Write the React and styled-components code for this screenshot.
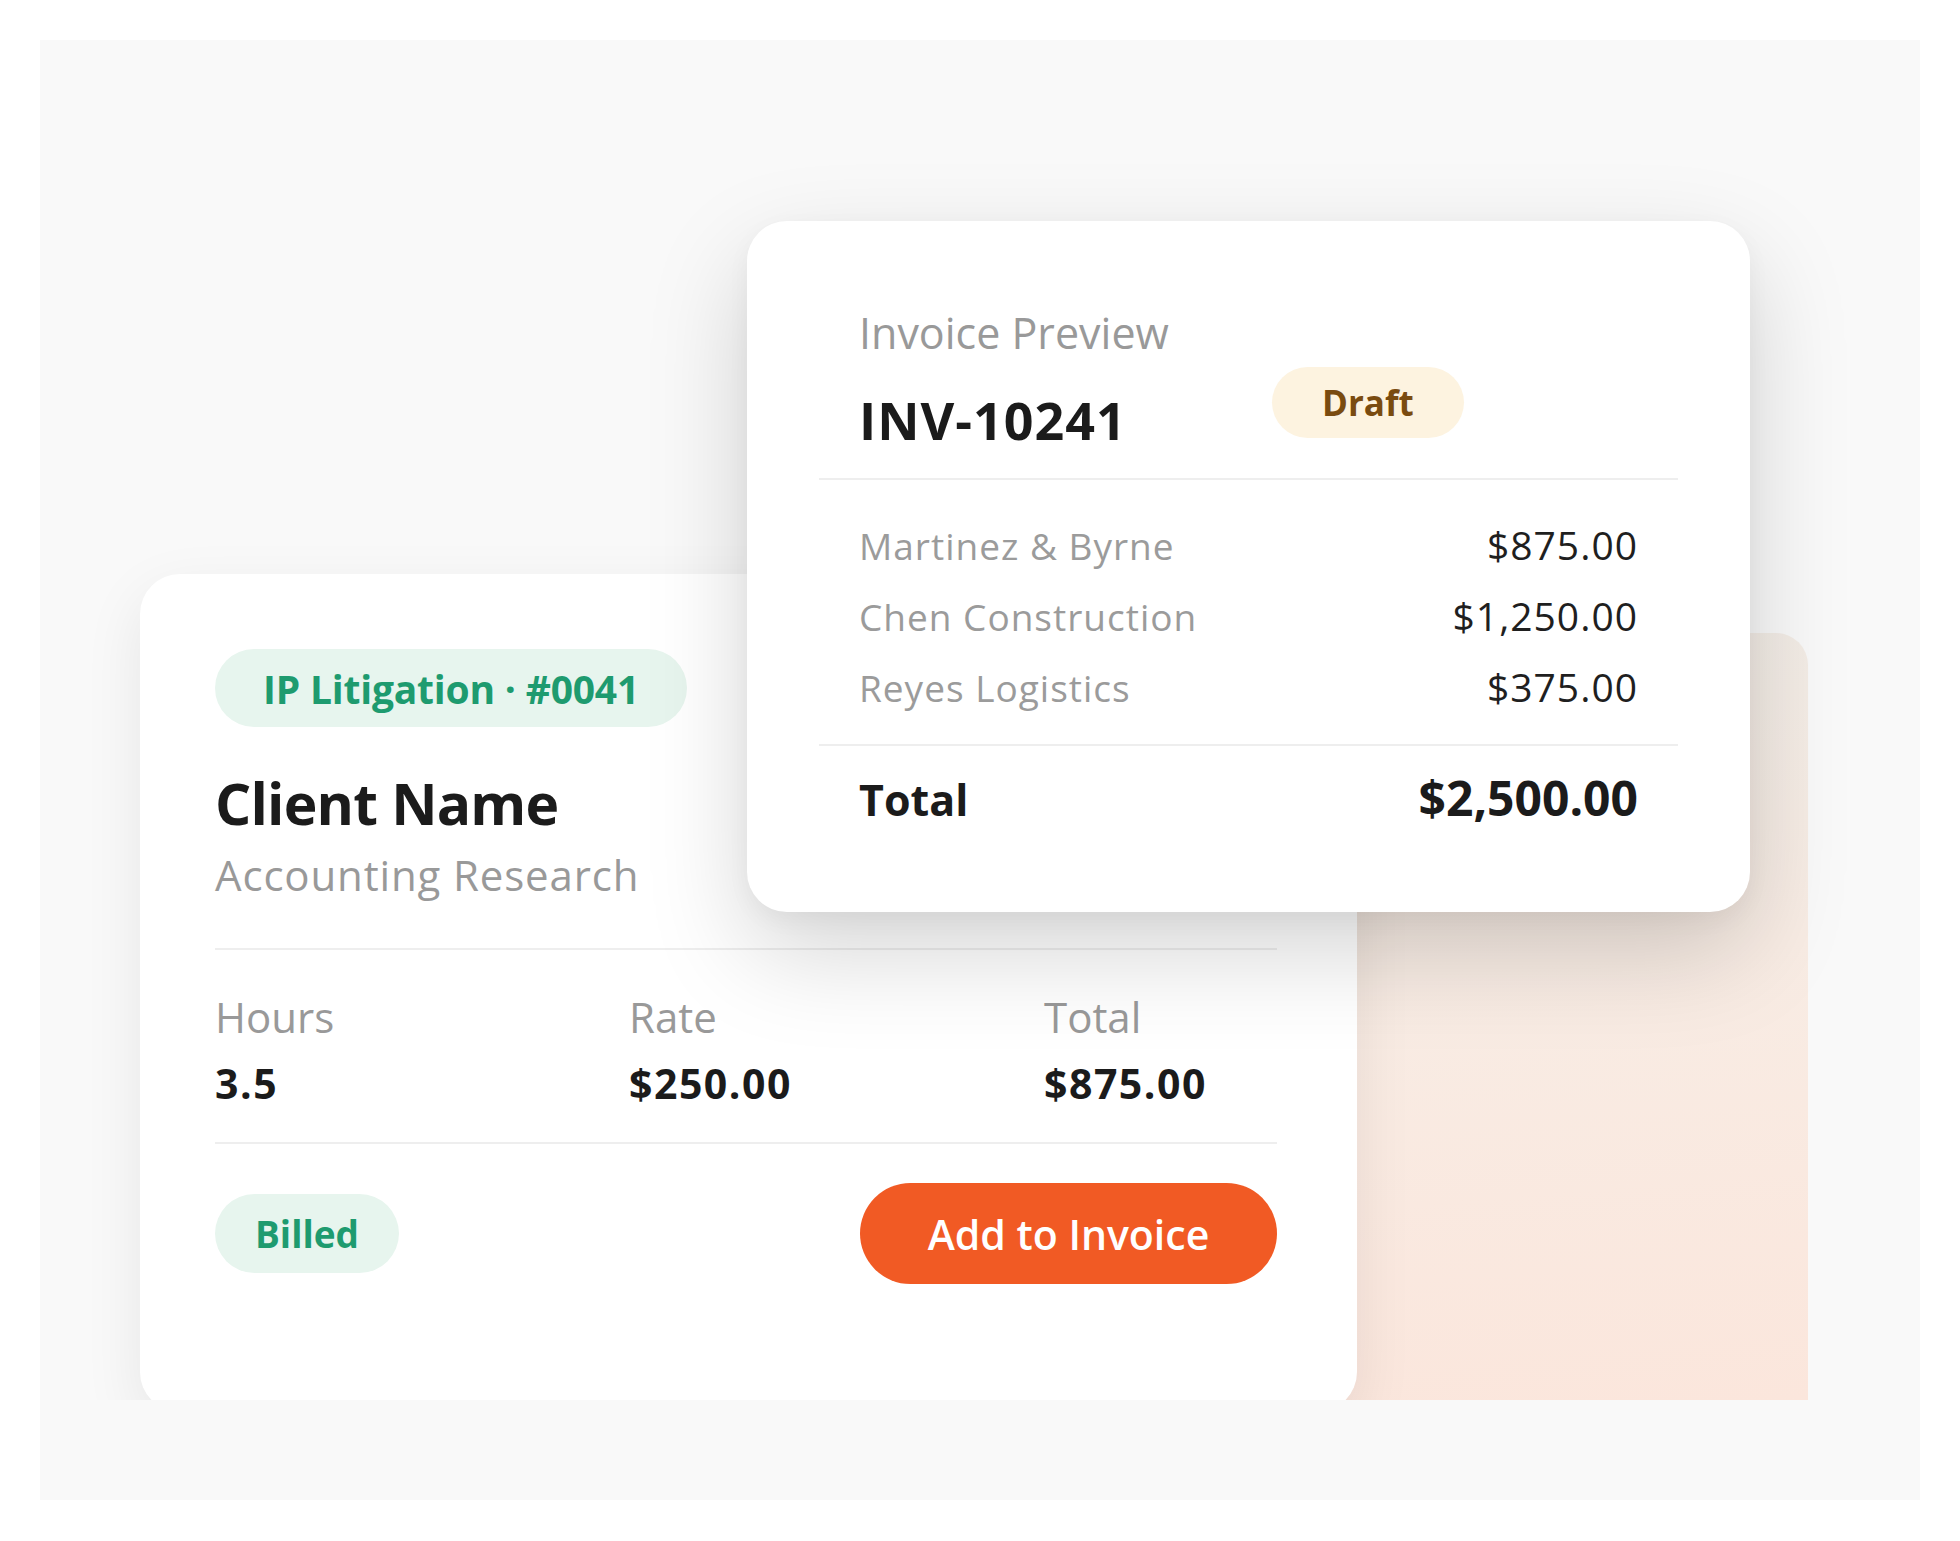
import React from "react";
import styled, { createGlobalStyle } from "styled-components";

const GlobalStyle = createGlobalStyle`
  html, body { margin: 0; padding: 0; background: #ffffff; }
  body { font-family: "Open Sans", Lato, sans-serif; -webkit-font-smoothing: antialiased; }
  * { box-sizing: border-box; }
`;

const Page = styled.div`
  width: 1960px;
  height: 1541px;
  padding: 40px;
`;

const Panel = styled.div`
  width: 1880px;
  height: 1460px;
  background: #f9f9f9;
  padding: 181px 0 0 100px;
`;

const Stage = styled.div`
  display: grid;
  grid-template-columns: 1668px;
  grid-template-rows: 1179px;
  width: 1668px;
  height: 1179px;
  clip-path: inset(-300px -300px 0 -300px);
  & > * { grid-area: 1 / 1; }
`;

const PeachPanel = styled.div`
  justify-self: end;
  align-self: end;
  width: 808px;
  height: 767px;
  border-top-right-radius: 32px;
  background: linear-gradient(175deg, #f2ede7 0%, #f8ece4 45%, #fbe6dc 100%);
`;

const Card = styled.div`
  justify-self: start;
  align-self: start;
  background: #ffffff;
  border-radius: 40px;
`;

const ClientCard = styled(Card)`
  margin-top: 353px;
  width: 1217px;
  height: 838px;
  padding: 75px 80px 0 75px;
  display: flex;
  flex-direction: column;
  align-items: stretch;
  box-shadow: 0 20px 60px rgba(0, 0, 0, 0.08);
`;

const InvoiceCard = styled(Card)`
  margin-left: 607px;
  width: 1003px;
  height: 691px;
  padding: 86px 72px 0 72px;
  box-shadow: 0 40px 100px rgba(0, 0, 0, 0.17), 0 8px 24px rgba(0, 0, 0, 0.04);
`;

const Pill = styled.span`
  display: inline-flex;
  align-items: center;
  justify-content: center;
  align-self: ${(p) => p.$align || "flex-start"};
  height: ${(p) => p.$h}px;
  padding: 0 ${(p) => p.$px}px;
  border-radius: 999px;
  font-size: ${(p) => p.$size}px;
  font-weight: 700;
  letter-spacing: ${(p) => p.$ls || 0}px;
  line-height: 1;
  white-space: nowrap;
  color: ${(p) => (p.$tone === "draft" ? "#7a4b10" : "#1e9b6f")};
  background: ${(p) => (p.$tone === "draft" ? "#fdf3e0" : "#e7f5ee")};
`;

const Header = styled.div`
  display: grid;
  grid-template-columns: 413px auto;
  align-items: start;
  padding: 0 40px 27px;
  border-bottom: 2px solid #eeeeee;
`;

const HeaderText = styled.div`
  display: flex;
  flex-direction: column;
  gap: 30px;
`;

const Text = styled.div`
  font-size: ${(p) => p.$size}px;
  font-weight: ${(p) => (p.$bold ? 700 : 400)};
  letter-spacing: ${(p) => p.$ls || 0}px;
  color: ${(p) => (p.$muted ? "#999999" : "#1b1b1b")};
  line-height: 1.2;
  white-space: nowrap;
`;

const DraftWrap = styled.div`
  margin-top: 60px;
`;

const Lines = styled.div`
  padding: 29px 40px 22px;
  border-bottom: 2px solid #eeeeee;
`;

const LineRow = styled.div`
  display: flex;
  justify-content: space-between;
  align-items: baseline;
  height: 71px;
  line-height: 71px;
`;

const LineName = styled.span`
  font-size: 37px;
  letter-spacing: 1px;
  color: #9b9b9b;
`;

const LineAmount = styled.span`
  font-size: 39px;
  letter-spacing: 1px;
  color: #1f1f1f;
`;

const TotalRow = styled.div`
  display: flex;
  justify-content: space-between;
  align-items: baseline;
  padding: 23px 40px 0;
`;

const Title = styled.div`
  margin-top: 42px;
  font-size: 57px;
  font-weight: 700;
  letter-spacing: -0.8px;
  color: #1b1b1b;
  line-height: 1.2;
`;

const Subtitle = styled.div`
  margin-top: 13px;
  font-size: 42px;
  letter-spacing: 0.85px;
  color: #999999;
  line-height: 1.2;
  padding-bottom: 47px;
  border-bottom: 2px solid #eeeeee;
`;

const Stats = styled.div`
  display: grid;
  grid-template-columns: 414px 415px auto;
  padding: 42px 0 34px;
  border-bottom: 2px solid #eeeeee;
`;

const Stat = styled.div`
  display: flex;
  flex-direction: column;
  gap: 17px;
`;

const Footer = styled.div`
  display: flex;
  justify-content: space-between;
  align-items: center;
  margin-top: 39px;
`;

const PrimaryButton = styled.button`
  width: 417px;
  height: 101px;
  border: none;
  border-radius: 51px;
  background: #f15a24;
  color: #ffffff;
  font-family: inherit;
  font-size: 41px;
  font-weight: 600;
  cursor: pointer;
`;

const lineItems = [
  { name: "Martinez & Byrne", amount: "$875.00" },
  { name: "Chen Construction", amount: "$1,250.00" },
  { name: "Reyes Logistics", amount: "$375.00" },
];

const stats = [
  { label: "Hours", value: "3.5" },
  { label: "Rate", value: "$250.00" },
  { label: "Total", value: "$875.00" },
];

export default function App() {
  return (
    <>
      <GlobalStyle />
      <Page>
        <Panel>
          <Stage>
            <PeachPanel />
            <ClientCard>
              <Pill $h={78} $px={48} $size={39} $ls={-0.2}>IP Litigation · #0041</Pill>
              <Title>Client Name</Title>
              <Subtitle>Accounting Research</Subtitle>
              <Stats>
                {stats.map((s) => (
                  <Stat key={s.label}>
                    <Text $size={42} $muted>{s.label}</Text>
                    <Text $size={41} $bold $ls={1.5}>{s.value}</Text>
                  </Stat>
                ))}
              </Stats>
              <Footer>
                <Pill $align="center" $h={79} $px={40} $size={37}>Billed</Pill>
                <PrimaryButton>Add to Invoice</PrimaryButton>
              </Footer>
            </ClientCard>
            <InvoiceCard>
              <Header>
                <HeaderText>
                  <Text $size={43} $muted>Invoice Preview</Text>
                  <Text $size={52} $bold $ls={1}>INV-10241</Text>
                </HeaderText>
                <DraftWrap>
                  <Pill $tone="draft" $h={71} $px={50} $size={35}>Draft</Pill>
                </DraftWrap>
              </Header>
              <Lines>
                {lineItems.map((l) => (
                  <LineRow key={l.name}>
                    <LineName>{l.name}</LineName>
                    <LineAmount>{l.amount}</LineAmount>
                  </LineRow>
                ))}
              </Lines>
              <TotalRow>
                <Text $size={43} $bold>Total</Text>
                <Text $size={48} $bold>$2,500.00</Text>
              </TotalRow>
            </InvoiceCard>
          </Stage>
        </Panel>
      </Page>
    </>
  );
}
